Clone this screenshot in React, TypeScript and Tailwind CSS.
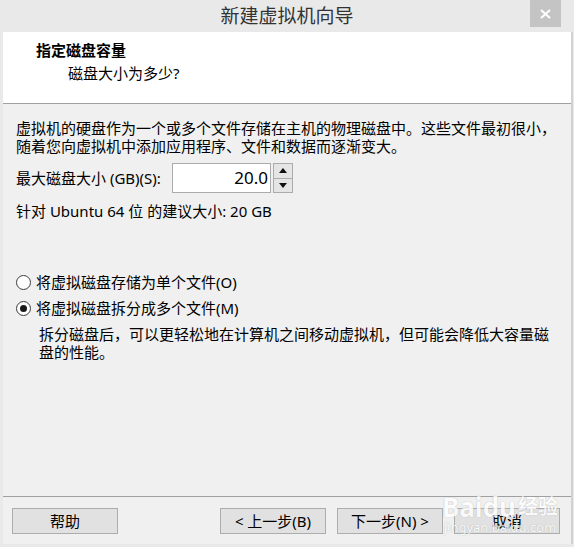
const ui = "font-['Noto_Sans','Noto_Sans_CJK_SC',sans-serif]";

function Radio({ checked }: { checked?: boolean }) {
  return (
    <span className="flex h-[15px] w-[15px] shrink-0 items-center justify-center rounded-full border border-[#3c3c3c] bg-white">
      {checked && <span className="h-[7px] w-[7px] rounded-full bg-[#1a1a1a]" />}
    </span>
  );
}

function WizardButton({ children }: { children: React.ReactNode }) {
  return (
    <button className="flex h-[26px] w-[106px] items-center justify-center border border-[#adadad] bg-[#e1e1e1] text-[15px] leading-none text-black">
      {children}
    </button>
  );
}

export default function App() {
  return (
    <div className={`${ui} relative flex h-[547px] w-[574px] flex-col bg-[#e9e9e9] text-black`}>
      {/* Title bar */}
      <div className="grid h-[32px] grid-cols-[1fr_auto_1fr]">
        <div />
        <div className="pt-[3px] text-[19px] leading-[26px] text-[#333]">新建虚拟机向导</div>
        <div className="flex justify-end pr-[13px]">
          <div className="flex h-[27px] w-[31px] items-center justify-center bg-[#c4c4c4]">
            <svg width="11" height="10" viewBox="0 0 11 10">
              <path d="M1 1 L10 9 M10 1 L1 9" stroke="#fff" strokeWidth="2" />
            </svg>
          </div>
        </div>
      </div>

      {/* Client area */}
      <div className="flex flex-1">
        <div className="ml-[3px] flex flex-1 flex-col">
          {/* Header */}
          <div className="h-[72px] border-b border-[#a0a0a0] bg-white pl-[33px] pt-[8px]">
            <div className="text-[15px] font-bold leading-[20px]">指定磁盘容量</div>
            <div className="pl-[32px] pt-[3px] text-[15px] leading-[20px]">磁盘大小为多少?</div>
          </div>

          {/* Body */}
          <div className="flex flex-1 flex-col bg-[#f0f0f0] px-[13px] pt-[15px] text-[15px] leading-[18px]">
            <div>虚拟机的硬盘作为一个或多个文件存储在主机的物理磁盘中。这些文件最初很小，</div>
            <div>随着您向虚拟机中添加应用程序、文件和数据而逐渐变大。</div>

            <div className="mt-[8px] flex h-[30px] items-center">
              <span className="w-[156px]">最大磁盘大小 (GB)(S):</span>
              <div className="flex h-[30px] w-[99px] items-center justify-end border border-[#acacac] bg-white pr-[2px] text-[17px]">
                20.0
              </div>
              <div className="ml-[2px] flex h-[30px] w-[20px] flex-col">
                <div className="flex flex-1 items-center justify-center border border-[#acacac] bg-[#e5e5e5]">
                  <svg width="8" height="5" viewBox="0 0 8 5">
                    <path d="M0 5 L4 0 L8 5 Z" fill="#111" />
                  </svg>
                </div>
                <div className="flex flex-1 items-center justify-center border border-t-0 border-[#acacac] bg-[#e5e5e5]">
                  <svg width="8" height="5" viewBox="0 0 8 5">
                    <path d="M0 0 L4 5 L8 0 Z" fill="#111" />
                  </svg>
                </div>
              </div>
            </div>

            <div className="mt-[9px]">针对 Ubuntu 64 位 的建议大小: 20 GB</div>

            <div className="mt-[53px] flex items-center gap-[5px]">
              <Radio />
              <span>将虚拟磁盘存储为单个文件(O)</span>
            </div>
            <div className="mt-[8px] flex items-center gap-[5px]">
              <Radio checked />
              <span>将虚拟磁盘拆分成多个文件(M)</span>
            </div>
            <div className="mt-[8px] pl-[23px]">
              <div>拆分磁盘后，可以更轻松地在计算机之间移动虚拟机，但可能会降低大容量磁</div>
              <div>盘的性能。</div>
            </div>

            <div className="flex-1" />
            <div className="-mx-[13px] border-t border-[#a0a0a0]" />
            <div className="-ml-[4px] -mr-[2px] flex h-[47px] items-start pt-[11px]">
              <WizardButton>帮助</WizardButton>
              <div className="flex-1" />
              <div className="flex gap-[11px]">
                <WizardButton>&lt; 上一步(B)</WizardButton>
                <WizardButton>下一步(N) &gt;</WizardButton>
                <WizardButton>取消</WizardButton>
              </div>
            </div>
          </div>
        </div>
        <div className="w-[3px] border-l-2 border-[#d2d2d2]" />
      </div>
      <div className="h-[3px]" />

      {/* Watermark */}
      <div className="pointer-events-none absolute left-[442px] top-[494px] flex flex-col items-center text-white opacity-80">
        <div className="flex items-end text-[26px] font-bold leading-[26px] [text-shadow:0_0_1px_#999]">
          <span>Baidu</span>
          <span className="ml-[2px] text-[20px]">经验</span>
        </div>
        <div className="text-[13px] leading-[14px] [text-shadow:0_0_1px_#999]">jingyan.baidu.com</div>
      </div>
    </div>
  );
}
